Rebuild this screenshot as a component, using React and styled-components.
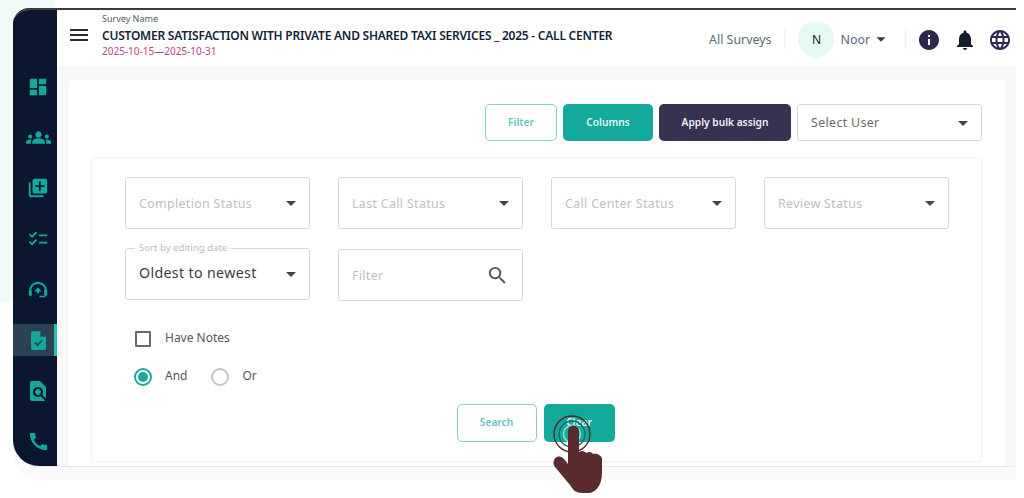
import React from "react";
import styled, { createGlobalStyle } from "styled-components";
import { MdDashboard, MdGroups, MdLibraryAdd, MdChecklist, MdFindInPage, MdCall, MdMenu, MdInfo, MdNotifications, MdLanguage, MdSearch, MdArrowDropDown } from "react-icons/md";

const Global = createGlobalStyle`
  html, body { margin: 0; padding: 0; background: #fff; }
  body { font-family: "Noto Sans", "Open Sans", sans-serif; color: #333; }
  * { box-sizing: border-box; }
`;

const Page = styled.div`
  position: relative;
  width: 1024px;
  height: 498px;
  overflow: hidden;
  padding: 8px 8px 32px 13px;
  background: #fff;
`;
const MintWash = styled.div`
  position: absolute;
  left: 0;
  top: 0;
  width: 55px;
  height: 303px;
  background: #f0faf8;
`;
const Window = styled.div`
  position: relative;
  display: flex;
  height: 458px;
  border-top: 2px solid #3b3b3b;
  border-top-left-radius: 16px;
  border-bottom-left-radius: 26px;
  overflow: hidden;
  background: #f8f8f8;
  box-shadow: 0 1px 0 #e8e8ee, 0 14px 0 #fafafa;
`;
const Sidebar = styled.nav`
  flex: 0 0 44px;
  display: flex;
  flex-direction: column;
  padding-top: 61px;
  background: #0b1731;
`;
const NavItem = styled.div`
  flex: none;
  height: 32px;
  margin-bottom: 18.65px;
  display: flex;
  align-items: center;
  justify-content: center;
  padding-left: 6px;
  color: #12a99b;
  font-size: ${p => p.$size || 22}px;
  ${p => p.$active && `
    background: #2c4151;
    border-right: 3px solid #25c4b0;
    padding-left: 9px;
  `}
`;
const Main = styled.div`
  flex: 1;
  min-width: 0;
  display: flex;
  flex-direction: column;
`;
const Header = styled.header`
  flex: 0 0 56px;
  display: flex;
  align-items: center;
  background: #fff;
  padding: 0 4px 0 10px;
`;
const Burger = styled.div`
  display: flex;
  font-size: 24px;
  color: #222b3a;
  margin: -6px 11px 0 0;
`;
const TitleBlock = styled.div`
  flex: 1;
  display: flex;
  flex-direction: column;
  margin-top: -7px;
`;
const Eyebrow = styled.div`
  font-size: 9px;
  line-height: 13px;
  margin-bottom: 1px;
  color: #545d6c;
`;
const Title = styled.div`
  font-size: 12px;
  line-height: 20px;
  font-weight: 600;
  color: #141f38;
  letter-spacing: -0.23px;
  white-space: nowrap;
`;
const DateRange = styled.div`
  font-size: 10px;
  line-height: 13px;
  margin-top: -1px;
  color: #b4478c;
`;
const TopLink = styled.span`
  font-size: 12.4px;
  color: #5b6878;
  margin-top: 2px;
`;
const Sep = styled.span`
  width: 1px;
  height: 20px;
  background: #eee;
  margin: 2px ${p => p.$r}px 0 ${p => p.$l}px;
`;
const Avatar = styled.div`
  width: 36px;
  height: 36px;
  border-radius: 50%;
  background: #e5f9f3;
  display: flex;
  align-items: center;
  justify-content: center;
  font-size: 12px;
  color: #1a2438;
  margin: 2px 6px 0 0;
`;
const UserName = styled.span`
  font-size: 12.4px;
  color: #5b6878;
  margin-top: 2px;
`;
const UserCaret = styled.span`
  display: flex;
  font-size: 22px;
  color: #333d50;
  margin: 2px 9px 0 0;
`;
const HeadIcon = styled.span`
  display: flex;
  font-size: 24px;
  color: ${p => p.$color};
  margin: 4px ${p => p.$r}px 0 0;
`;
const Content = styled.main`
  flex: 1;
  padding: 14px 10px 0 11px;
  min-height: 0;
`;
const Card = styled.section`
  height: 392px;
  background: #fff;
  border-radius: 5px;
  padding: 24px 24px 0 23px;
  box-shadow: 0 1px 3px rgba(0,0,0,.05);
`;
const Toolbar = styled.div`
  display: flex;
  justify-content: flex-end;
  gap: 6px;
  height: 37px;
`;
const Button = styled.button`
  width: ${p => p.$w}px;
  height: ${p => p.$h || 37}px;
  border-radius: 5px;
  font: 600 10.2px "Noto Sans", sans-serif;
  padding: 0 0 2px;
  cursor: pointer;
  border: ${p => p.$variant === "outline" ? "1.5px solid #7fd3cb" : "none"};
  background: ${p => p.$variant === "outline" ? "#fff" : p.$variant === "dark" ? "#36324f" : "#13a99b"};
  color: ${p => p.$variant === "outline" ? "#63c7bd" : p.$variant === "dark" ? "#f0eff5" : "#e4f5f3"};
`;
const Field = styled.div`
  position: relative;
  width: ${p => p.$w || 185}px;
  height: ${p => p.$h || 52}px;
  flex: none;
  margin-top: ${p => p.$mt || 0}px;
  border: 1.5px solid #d8d8d8;
  border-radius: 3px;
  display: flex;
  align-items: center;
  justify-content: space-between;
  padding: 0 6px 0 13px;
  background: #fff;
`;
const FieldText = styled.span`
  font-size: ${p => p.$size || 12.4}px;
  color: ${p => p.$color || "#c0c0c0"};
  letter-spacing: .35px;
  white-space: nowrap;
  margin-top: ${p => p.$mt || 0}px;
`;
const Caret = styled.span`
  display: flex;
  font-size: 24px;
  color: #4a4346;
`;
const Legend = styled.span`
  position: absolute;
  left: 9px;
  top: -6px;
  padding: 0 4px;
  background: #fff;
  font-size: 9.6px;
  line-height: 10px;
  color: #bdbdbd;
`;
const SearchGlyph = styled.span`
  display: flex;
  font-size: 23px;
  color: #59504f;
  margin-right: 7px;
`;
const FilterPanel = styled.div`
  height: 305px;
  margin-top: 16px;
  border: 1px solid #f1f1f1;
  border-radius: 3px;
  padding: 19px 33px 0;
`;
const FieldRow = styled.div`
  display: flex;
  gap: 28px;
  margin-bottom: ${p => p.$mb}px;
  align-items: flex-start;
`;
const OptionRow = styled.div`
  display: flex;
  align-items: center;
  height: 18px;
  margin: 0 0 ${p => p.$mb || 0}px 9px;
`;
const Check = styled.span`
  width: 16px;
  height: 16px;
  border: 2px solid #6a6a6a;
  border-radius: 1px;
  margin-left: 1px;
`;
const Radio = styled.span`
  width: 18px;
  height: 18px;
  flex: none;
  border-radius: 50%;
  border: 2px solid ${p => p.$on ? "#16ab9c" : "#c4c4c4"};
  display: flex;
  align-items: center;
  justify-content: center;
  &::after {
    content: "";
    width: 10px;
    height: 10px;
    border-radius: 50%;
    background: ${p => p.$on ? "#16ab9c" : "transparent"};
  }
`;
const OptionLabel = styled.span`
  font-size: 12px;
  color: #5a5457;
  margin: -3px ${p => p.$r || 0}px 0 ${p => p.$l}px;
`;
const Actions = styled.div`
  display: flex;
  justify-content: center;
  gap: 7px;
  margin: 18px 2px 0 0;
`;
const HandLayer = styled.svg`
  position: absolute;
  left: 545px;
  top: 410px;
  width: 65px;
  height: 88px;
  pointer-events: none;
`;

const HeadsetIcon = () => (
  <svg width="20" height="17" viewBox="0 0 21 18" fill="none">
    <path d="M2 14 V10.5 a8.5 8.5 0 0 1 17 0 V14" stroke="currentColor" strokeWidth="2.2" />
    <rect x="0.8" y="9.5" width="3.2" height="6.5" rx="1.4" fill="currentColor" />
    <rect x="17" y="9.5" width="3.2" height="6.5" rx="1.4" fill="currentColor" />
    <path d="M18 16.5 H12" stroke="currentColor" strokeWidth="1.6" />
    <path d="M6.5 11 L10.5 6.5 L14.5 11 Z M9.5 11 h2 v2 h-2 Z" fill="currentColor" />
  </svg>
);
const FileCheckIcon = () => (
  <svg width="15" height="19" viewBox="0 0 16 20">
    <path d="M2 0 H10 L16 6 V18 a2 2 0 0 1 -2 2 H2 a2 2 0 0 1 -2 -2 V2 a2 2 0 0 1 2 -2 Z" fill="currentColor" />
    <path d="M10 0 V6 H16" fill="#2c4151" />
    <path d="M4 12 L7 15 L12 9.5" stroke="#2c4151" strokeWidth="1.8" fill="none" />
  </svg>
);

const Dropdown = ({ label }) => (
  <Field>
    <FieldText>{label}</FieldText>
    <Caret><MdArrowDropDown /></Caret>
  </Field>
);

export default function App() {
  return (
    <Page>
      <Global />
      <MintWash />
      <Window>
        <Sidebar>
          <NavItem><MdDashboard /></NavItem>
          <NavItem $size={25}><MdGroups /></NavItem>
          <NavItem><MdLibraryAdd /></NavItem>
          <NavItem><MdChecklist /></NavItem>
          <NavItem><HeadsetIcon /></NavItem>
          <NavItem $active><FileCheckIcon /></NavItem>
          <NavItem $size={24}><MdFindInPage /></NavItem>
          <NavItem $size={23}><MdCall /></NavItem>
        </Sidebar>
        <Main>
          <Header>
            <Burger><MdMenu /></Burger>
            <TitleBlock>
              <Eyebrow>Survey Name</Eyebrow>
              <Title>CUSTOMER SATISFACTION WITH PRIVATE AND SHARED TAXI SERVICES _ 2025 - CALL CENTER</Title>
              <DateRange>2025-10-15—2025-10-31</DateRange>
            </TitleBlock>
            <TopLink>All Surveys</TopLink>
            <Sep $l={13} $r={13} />
            <Avatar>N</Avatar>
            <UserName>Noor</UserName>
            <UserCaret><MdArrowDropDown /></UserCaret>
            <Sep $l={4} $r={11} />
            <HeadIcon $color="#2b2950" $r={12}><MdInfo /></HeadIcon>
            <HeadIcon $color="#151d2e" $r={11}><MdNotifications /></HeadIcon>
            <HeadIcon $color="#2b2950" $r={0}><MdLanguage /></HeadIcon>
          </Header>
          <Content>
            <Card>
              <Toolbar>
                <Button $variant="outline" $w={72}>Filter</Button>
                <Button $w={90}>Columns</Button>
                <Button $variant="dark" $w={132}>Apply bulk assign</Button>
                <Field $w={185} $h={37}>
                  <FieldText $color="#6e6668">Select User</FieldText>
                  <Caret><MdArrowDropDown /></Caret>
                </Field>
              </Toolbar>
              <FilterPanel>
                <FieldRow $mb={19}>
                  <Dropdown label="Completion Status" />
                  <Dropdown label="Last Call Status" />
                  <Dropdown label="Call Center Status" />
                  <Dropdown label="Review Status" />
                </FieldRow>
                <FieldRow $mb={29}>
                  <Field>
                    <Legend>Sort by editing date</Legend>
                    <FieldText $size={14.2} $mt={-4} $color="#3f3a3c">Oldest to newest</FieldText>
                    <Caret><MdArrowDropDown /></Caret>
                  </Field>
                  <Field $mt={1}>
                    <FieldText>Filter</FieldText>
                    <SearchGlyph><MdSearch /></SearchGlyph>
                  </Field>
                </FieldRow>
                <OptionRow $mb={20}>
                  <Check />
                  <OptionLabel $l={14}>Have Notes</OptionLabel>
                </OptionRow>
                <OptionRow>
                  <Radio $on />
                  <OptionLabel $l={13} $r={24}>And</OptionLabel>
                  <Radio />
                  <OptionLabel $l={13}>Or</OptionLabel>
                </OptionRow>
                <Actions>
                  <Button $variant="outline" $w={80} $h={38}>Search</Button>
                  <Button $w={71} $h={38}>Clear</Button>
                </Actions>
              </FilterPanel>
            </Card>
          </Content>
        </Main>
      </Window>
      <HandLayer viewBox="545 410 65 88">
        <circle cx="572" cy="434" r="18" fill="none" stroke="#4e2b2c" strokeWidth="1.4" />
        <circle cx="572" cy="434" r="13" fill="none" stroke="#0d6f68" strokeWidth="1.4" />
        <circle cx="572" cy="434" r="8.5" fill="none" stroke="#9fe0d8" strokeWidth="1.4" />
        <path d="M568 431 a5 5 0 0 1 11 0 V452 c3 -2 6 -1 7 1 c3 -2 6 -1 7 1 c3 -1 9 1 9 5 V473 c0 12 -6 20 -14 20 h-6 c-6 0 -9 -3 -12 -8 L555 467 c-3 -4 -1 -9 2 -10 c3 -1 5 0 7 2 l4 5 Z" fill="#5a2b2c" />
      </HandLayer>
    </Page>
  );
}
